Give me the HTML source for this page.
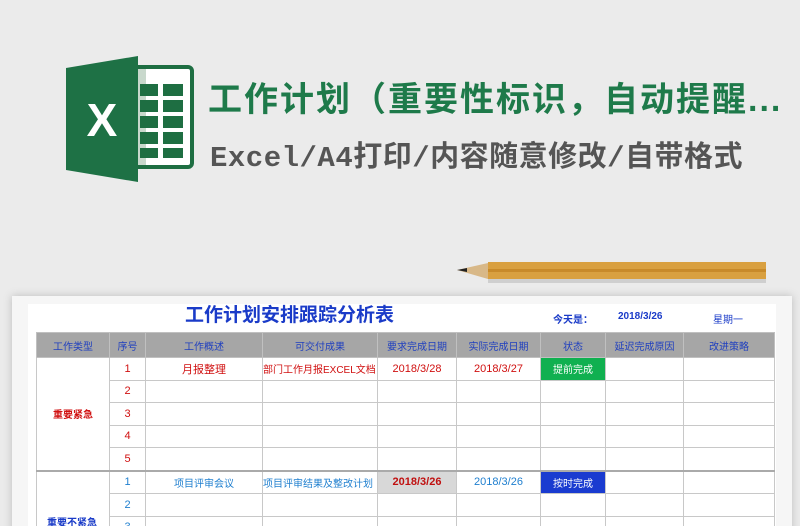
<!DOCTYPE html><html><head><meta charset="utf-8"><style>
html,body{margin:0;width:800px;height:526px;overflow:hidden}
body{background:#ebebeb;position:relative;font-family:"Liberation Sans","Noto Sans CJK SC",sans-serif}
.a{position:absolute}
table{border-collapse:collapse;position:absolute;left:36px;top:332px;table-layout:fixed;font-size:11px}
td{border:1px solid #c8c8c8;height:21.5px;padding:0;text-align:center;white-space:nowrap;overflow:hidden;vertical-align:middle}
th{background:#a6a6a6;color:#1f3fbf;font-weight:normal;border:1px solid #c0c0c0;height:22px;font-size:10px}
.r{color:#d01010}.b{color:#1f7fcf}
</style></head><body>
<svg class="a" style="left:64px;top:56px" width="132" height="126" viewBox="0 0 132 126">
<rect x="70" y="11" width="58" height="100" rx="4" fill="#fff" stroke="#1e6e42" stroke-width="4"/>
<rect x="72" y="13" width="10" height="96" fill="#c8d8cc"/>
<g fill="#1e6e42"><rect x="76" y="28" width="18" height="12"/><rect x="99" y="28" width="20" height="12"/><rect x="76" y="44" width="18" height="12"/><rect x="99" y="44" width="20" height="12"/><rect x="76" y="60" width="18" height="12"/><rect x="99" y="60" width="20" height="12"/><rect x="76" y="76" width="18" height="12"/><rect x="99" y="76" width="20" height="12"/><rect x="76" y="92" width="18" height="10"/><rect x="99" y="92" width="20" height="10"/></g>
<path d="M2 12 L74 0 L74 126 L2 114Z" fill="#1e7145"/>
<text x="38" y="80" font-family="Liberation Sans" font-weight="bold" font-size="46" fill="#fff" text-anchor="middle">X</text>
</svg>
<div class="a" style="left:208px;top:72px;font-size:34px;font-weight:bold;color:#1e7a4a;white-space:nowrap;letter-spacing:2px">工作计划（重要性标识，自动提醒...</div>
<div class="a" style="left:210px;top:133px;font-size:29px;font-weight:bold;color:#555;white-space:nowrap;letter-spacing:0.5px;font-family:'Liberation Mono','Noto Sans CJK SC',monospace">Excel/A4打印/内容随意修改/自带格式</div>
<svg class="a" style="left:455px;top:258px" width="315" height="26"><path d="M2 12 L33 5 L33 21Z" fill="#d8b888"/><path d="M2 12 L12 10 L12 14Z" fill="#222"/><rect x="33" y="4" width="278" height="17" fill="#d9a040"/><rect x="33" y="11" width="278" height="3" fill="#c88a2a"/><rect x="33" y="21" width="278" height="4" fill="#cfcfcf"/></svg>
<div class="a" style="left:12px;top:296px;width:780px;height:240px;background:#f6f6f6;box-shadow:0 0 8px #bbb"></div>
<div class="a" style="left:28px;top:304px;width:748px;height:230px;background:#fff"></div>
<div class="a" style="left:185px;top:300px;font-size:19px;font-weight:bold;color:#1a3bc8;white-space:nowrap">工作计划安排跟踪分析表</div>
<div class="a" style="left:553px;top:311px;font-size:10px;font-weight:bold;color:#1a3bc8">今天是：</div>
<div class="a" style="left:618px;top:311px;font-size:10px;font-weight:bold;color:#1a3bc8">2018/3/26</div>
<div class="a" style="left:713px;top:311px;font-size:10px;color:#1a3bc8">星期一</div>
<table>
<colgroup><col width="73"><col width="36"><col width="117"><col width="115"><col width="79"><col width="84"><col width="65"><col width="78"><col width="91"></colgroup>
<tr><th>工作类型</th><th>序号</th><th>工作概述</th><th>可交付成果</th><th>要求完成日期</th><th>实际完成日期</th><th>状态</th><th>延迟完成原因</th><th>改进策略</th></tr>
<tr><td rowspan="5" class="r" style="font-weight:bold;font-size:10px">重要紧急</td><td class="r">1</td><td class="r">月报整理</td><td class="r" style="text-align:left;font-size:10px">部门工作月报EXCEL文档</td><td class="r">2018/3/28</td><td class="r">2018/3/27</td><td style="background:#10b050;color:#fff;font-size:10px">提前完成</td><td></td><td></td></tr>
<tr><td class="r">2</td><td></td><td></td><td></td><td></td><td></td><td></td><td></td></tr>
<tr><td class="r">3</td><td></td><td></td><td></td><td></td><td></td><td></td><td></td></tr>
<tr><td class="r">4</td><td></td><td></td><td></td><td></td><td></td><td></td><td></td></tr>
<tr><td class="r">5</td><td></td><td></td><td></td><td></td><td></td><td></td><td></td></tr>
<tr style="border-top:2px solid #aaa"><td rowspan="3"></td><td class="b">1</td><td class="b" style="font-size:10px">项目评审会议</td><td class="b" style="text-align:left;font-size:10px">项目评审结果及整改计划</td><td style="background:#d8d8d8;color:#c01010;font-weight:bold">2018/3/26</td><td class="b">2018/3/26</td><td style="background:#1a3bd0;color:#fff;font-size:10px">按时完成</td><td></td><td></td></tr>
<tr><td class="b">2</td><td></td><td></td><td></td><td></td><td></td><td></td><td></td></tr>
<tr><td class="b">3</td><td></td><td></td><td></td><td></td><td></td><td></td><td></td></tr>
</table>
<div class="a" style="left:47px;top:514px;font-size:10px;font-weight:bold;color:#1a3bc8">重要不紧急</div>
</body></html>
